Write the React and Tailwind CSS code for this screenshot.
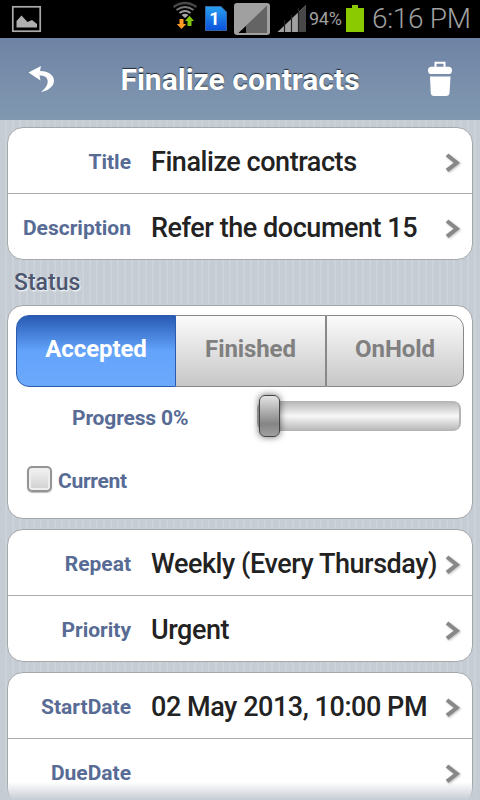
import React from "react";

const ChevronRight = () => (
  <svg width="18" height="22" viewBox="0 0 18 22" className="shrink-0 drop-shadow-[1px_1px_1px_rgba(0,0,0,0.25)]">
    <path d="M2 3 L11.8 10.7 L2 18.4" fill="none" stroke="#888" strokeWidth="4" />
  </svg>
);

const Row = ({ label, value }) => (
  <div className="box-content flex h-[65px] items-center">
    <span className="w-[123px] shrink-0 pt-[2px] text-right text-[21px] font-bold leading-6 text-[#576b95]">
      {label}
    </span>
    <span className="ml-5 flex-1 whitespace-nowrap pt-[3px] text-[27px] font-medium leading-8 tracking-[-0.45px] text-[#222]">
      {value}
    </span>
    <div className="mr-[9px] pt-[4px]">
      <ChevronRight />
    </div>
  </div>
);

const Card = ({ rows }) => (
  <div className="divide-y divide-[#aaacad] rounded-[16px] border border-[#a5a8ab] bg-white">
    {rows.map((row) => (
      <Row key={row.label} label={row.label} value={row.value} />
    ))}
  </div>
);

const StatusBar = () => (
  <div className="flex h-[38px] shrink-0 items-center bg-black text-[#a0a0a0]">
    <svg width="320" height="38" viewBox="0 0 320 38" className="shrink-0">
      {/* gallery */}
      <rect x="12.8" y="6.8" width="27.4" height="24.4" fill="none" stroke="#aaa" strokeWidth="1.7" />
      <path d="M16.5 27.5 V21 L21.5 15.5 L27.5 22 L32 20 L37 24 V27.5Z" fill="#b0b0b0" />
      {/* wifi */}
      <g fill="none" strokeWidth="2">
        <path d="M173.5 7 Q185 -1 196.5 7" stroke="#474747" strokeWidth="2.6" />
        <path d="M176.5 10 Q185 4 193.5 10" stroke="#777" />
        <path d="M179.5 13 Q185 9 190.5 13" stroke="#999" />
      </g>
      <path d="M181.5 15 Q185 12.5 188.5 15 L185 18Z" fill="#aaa" />
      <path d="M179.5 19 h4 v5 h2.7 l-4.7 5 l-4.7 -5 h2.7z" fill="#ff9a22" />
      <path d="M187.5 26 h4 v-5 h2.5 l-4.5 -5.3 l-4.5 5.3 h2.5z" fill="#83c500" />
      {/* sim card */}
      <defs>
        <linearGradient id="sim" x1="0" y1="0" x2="0" y2="1">
          <stop offset="0" stopColor="#28a0ee" />
          <stop offset="1" stopColor="#0b50dc" />
        </linearGradient>
      </defs>
      <path d="M205.5 6.5 H221 L226.5 12 V30.5 H205.5Z" fill="url(#sim)" stroke="#3b65a0" />
      <text x="214.5" y="25" textAnchor="middle" fontFamily="Roboto, sans-serif" fontWeight="700" fontSize="18" fill="#fff">1</text>
      {/* no signal on second sim */}
      <rect x="234" y="3" width="36" height="32" rx="3" fill="#a0a0a0" />
      <path d="M238.5 33 L267 5.5 V33Z" fill="#646464" />
      <path d="M238.5 33 L246 26 V33Z" fill="#000" />
      {/* signal */}
      <path d="M277.5 32 L306 5 V32Z" fill="#a0a0a0" />
      <path d="M299 12 L306 5 V32 H299Z" fill="#484848" />
      <path d="M284.5 20 V32 M291.5 15 V32 M298.5 8 V32" stroke="#222" strokeWidth="1.2" />
    </svg>
    <span className="-ml-[11px] w-[37px] whitespace-nowrap text-[18px] leading-6 tracking-[-0.3px]">94%</span>
    <svg width="18" height="28" viewBox="0 0 18 28" className="shrink-0">
      <path d="M0 3 H6 V0 H12 V3 H18 V27 H0Z" fill="#8bc900" />
    </svg>
    <span className="ml-2 whitespace-nowrap text-[28px] font-light leading-8 tracking-[-0.3px]">6:16 PM</span>
  </div>
);

const Header = () => (
  <div className="flex h-[82px] shrink-0 items-center justify-between bg-linear-to-b from-[#6f84a4] to-[#8198b1]">
    <svg width="82" height="82" viewBox="0 0 82 82" className="shrink-0">
      <path
        d="M28.5 34.5 L41 28 L40 33 C49 33 54 38 54 42.5 C54 49 47 53 41 54 C46 50 48.5 46 47.5 42 C46.5 38.5 44 37.5 39.5 37.5 L40.5 42.5Z"
        fill="#fff"
      />
    </svg>
    <h1 className="whitespace-nowrap pt-[2px] text-[30px] font-bold leading-9 text-white [text-shadow:0_-1px_1px_rgba(0,0,0,0.7)]">
      Finalize contracts
    </h1>
    <svg width="82" height="82" viewBox="0 0 82 82" className="shrink-0">
      <path d="M37.5 30 V24.7 H46.5 V30" fill="none" stroke="#fff" strokeWidth="2" />
      <rect x="30" y="28.7" width="24" height="7.3" rx="3.6" fill="#fff" />
      <path d="M32 38.5 H52.5 L51.5 55 Q51.2 58 48 58 H36 Q33 58 32.8 55Z" fill="#fff" />
    </svg>
  </div>
);

const StatusCard = () => (
  <div className="h-[214px] rounded-[16px] border border-[#a5a8ab] bg-white">
    <div className="ml-2 mt-[9px] flex h-[72px] w-[448px] text-center text-[24px] font-bold leading-[64px] tracking-[-0.1px] text-[#808080]">
      <button className="w-[160px] rounded-l-[13px] border border-[#2a5db0] bg-linear-to-b from-[#295bb3] via-[#63a3fb] via-50% to-[#6ba9fb] pb-1 text-white">
        Accepted
      </button>
      <button className="w-[150px] border-y border-r border-[#888] bg-linear-to-b from-[#fbfbfb] to-[#c7c7c7] pb-1">
        Finished
      </button>
      <button className="w-[138px] rounded-r-[13px] border border-[#888] bg-linear-to-b from-[#fbfbfb] to-[#c7c7c7] pb-1">
        OnHold
      </button>
    </div>
    <div className="mt-[11px] flex h-[44px] items-center">
      <span className="ml-16 w-[185px] pb-1 text-[21px] font-bold leading-6 tracking-[-0.15px] text-[#576b95]">
        Progress 0%
      </span>
      <div className="mb-2 flex h-[30px] w-[204px] items-center rounded-[8px] border-x-2 border-[#b5b5b5] bg-linear-to-b from-[#b4b4b4] via-[#f8f8f8] to-[#b4b4b4]">
        <div className="h-[42px] w-[21px] rounded-[6px] border border-[#444] bg-linear-to-b from-[#e4e4e4] via-[#858585] via-70% to-[#a0a0a0] shadow-[0_0_7px_rgba(0,0,0,0.6)]" />
      </div>
    </div>
    <div className="mt-[23px] flex items-center">
      <div className="ml-[19px] h-[26px] w-[25px] rounded-[5px] border-2 border-[#949494] bg-linear-to-b from-[#f3f3f3] to-[#d0d0d0] shadow-[inset_0_0_0_2px_#eee,0_1px_1px_#bbb]" />
      <span className="ml-[6px] pt-[4px] text-[21px] font-bold leading-6 tracking-[-0.3px] text-[#576b95]">Current</span>
    </div>
  </div>
);

const App = () => {
  return (
    <div className="relative flex h-[800px] w-[480px] flex-col overflow-hidden bg-[#c5ccd4] font-[Roboto,sans-serif]">
      <StatusBar />
      <Header />
      <div className="flex-1 overflow-hidden bg-[repeating-linear-gradient(90deg,#c5ccd4_0px,#c5ccd4_5px,#cbd2d8_5px,#cbd2d8_7px)] px-[7px] pt-[7px]">
        <Card
          rows={[
            { label: "Title", value: "Finalize contracts" },
            { label: "Description", value: "Refer the document 15" },
          ]}
        />
        <h2 className="h-[45px] pl-[7px] pt-[7px] text-[23px] font-medium leading-8 text-[#4d566f] [text-shadow:1px_1px_2px_#fff]">
          Status
        </h2>
        <StatusCard />
        <div className="mt-[10px] space-y-[10px]">
          <Card
            rows={[
              { label: "Repeat", value: "Weekly (Every Thursday)" },
              { label: "Priority", value: "Urgent" },
            ]}
          />
          <Card
            rows={[
              { label: "StartDate", value: "02 May 2013, 10:00 PM" },
              { label: "DueDate", value: "" },
            ]}
          />
        </div>
      </div>
      {/* fade at the bottom of the scroll area */}
      <div className="pointer-events-none absolute inset-x-0 bottom-0 h-[18px] bg-linear-to-b from-transparent to-[#c5ccd4]" />
    </div>
  );
};

export default App;
